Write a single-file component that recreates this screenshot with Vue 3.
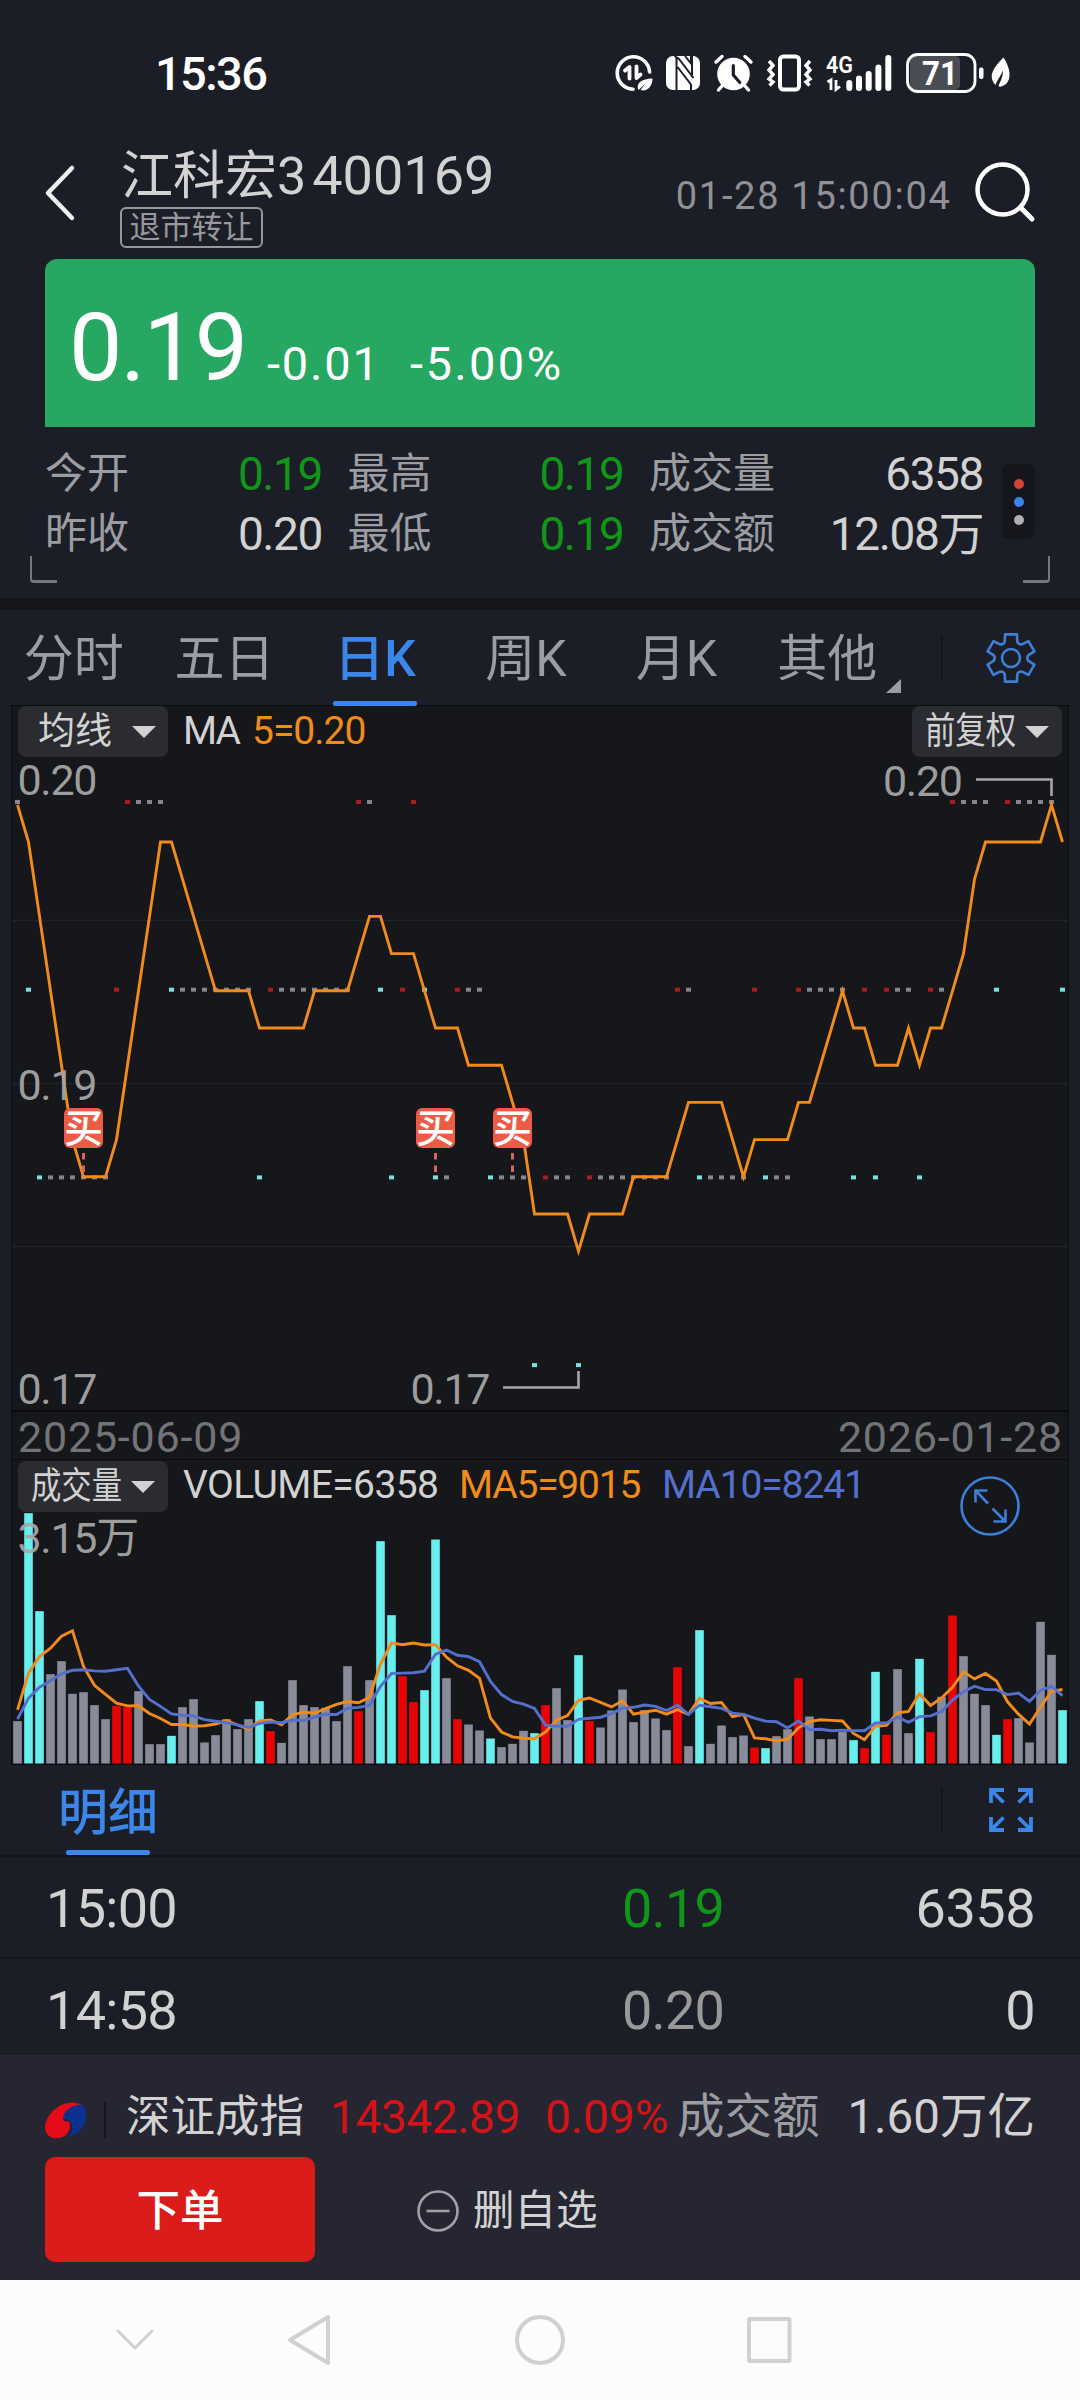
<template>
  <div class="page">
    <div class="status-bar">
      <span class="clock">15:36</span>
      <svg class="status-icons" width="440" height="70" viewBox="0 0 440 70">
        <!-- data saver -->
        <g fill="none" stroke="#fff" stroke-width="3.6" stroke-linecap="round">
          <path d="M43 49.200A16.200 16.200 0 1 1 59.600 32" />
          <path d="M35 30.500l4.500-3.500V38.500M46.500 26.500V38l4-3.500" stroke-width="3.800" stroke-linejoin="round" />
        </g>
        <path d="M48.500 50c-3-6.500 3-11.500 14-11.500 0 8-5.500 13.500-12 11.500l5-6.500z" fill="#fff" />
        <!-- nfc -->
        <rect x="76" y="16" width="34" height="34" rx="7" fill="#fff" />
        <path d="M84.500 16l4.500 3 14.500 19M86.500 18v32M87.500 27l13.500 17.500v5.500M95 16l6 7.500V16M102 16V37" stroke="#1b1e27" stroke-width="2" fill="none" />
        <!-- alarm -->
        <circle cx="143.500" cy="34" r="16.300" fill="#fff" />
        <path d="M126 22l6-5.500M161 22l-6-5.500M132 46l-3.500 4M155 46l3.500 4" stroke="#fff" stroke-width="3.400" stroke-linecap="round" />
        <path d="M143.300 25.500v9.500l6.500 7.500" fill="none" stroke="#1b1e27" stroke-width="3.200" stroke-linecap="round" />
        <!-- vibrate -->
        <rect x="190" y="16.500" width="19" height="33" rx="3.500" fill="none" stroke="#fff" stroke-width="4" />
        <path d="M179 21l4 4.500-4 4.500 4 4.500-4 4.500 4 3-3.500 3.500M220 21l-4 4.500 4 4.500-4 4.500 4 4.500-4 3 3.500 3.500" fill="none" stroke="#fff" stroke-width="3.400" />
        <!-- signal -->
        <text x="236" y="32.500" class="net" textLength="27" lengthAdjust="spacingAndGlyphs">4G</text>
        <path d="M237.500 42l3.500-2v10M246 40v9.500l4-3" fill="none" stroke="#fff" stroke-width="2.800" />
        <path d="M259.300 43v5M269 38.500v9.500M278.700 34v14M288.400 27.500v20.500M298.300 18v30" stroke="#fff" stroke-width="6" stroke-linecap="round" />
        <!-- battery -->
        <rect x="320" y="16" width="50" height="34" rx="5" fill="#4a4c53" />
        <rect x="317.500" y="14.500" width="67.500" height="37" rx="10" fill="none" stroke="#fff" stroke-width="2.800" />
        <text x="332" y="45" class="level" textLength="36" lengthAdjust="spacingAndGlyphs">71</text>
        <rect x="389" y="27.500" width="4.500" height="11.500" rx="2" fill="#fff" />
        <path d="M413.500 17.500c8 12 9 26-2.500 29-2 .5-3 0-2-2 2.500-5 4-9 4-14-3 6.500-5.500 9.500-7.500 14.500-8-9-2-17.500 8-27.500z" fill="#fff" />
      </svg>
    </div>

    <header class="header">
      <svg class="back" width="32" height="58" viewBox="0 0 32 58">
        <path d="M28 4L4 29l24 25" fill="none" stroke="#eee" stroke-width="4.500" stroke-linecap="round" stroke-linejoin="round" />
      </svg>
      <div class="title">
        <div class="name">江科宏3<span class="code">400169</span></div>
        <span class="tag">退市转让</span>
      </div>
      <span class="datetime">01-28 15:00:04</span>
      <svg class="search" width="62" height="62" viewBox="0 0 62 62">
        <circle cx="28.500" cy="28.500" r="25" fill="none" stroke="#fff" stroke-width="4.500" />
        <path d="M46.500 46.500L58 58" stroke="#fff" stroke-width="5" stroke-linecap="round" />
      </svg>
    </header>

    <section class="quote">
      <span class="price">0.19</span>
      <span class="change">-0.01</span>
      <span class="percent">-5.00%</span>
    </section>

    <section class="stats">
      <div class="stat-grid">
        <div v-for="item in stats" :key="item.label" class="stat">
          <span class="stat-label">{{ item.label }}</span>
          <span class="stat-value" :class="{ down: item.down }">{{ item.value }}</span>
        </div>
      </div>
      <div class="more"><i class="dot red"></i><i class="dot blue"></i><i class="dot gray"></i></div>
      <i class="corner left"></i>
      <i class="corner right"></i>
    </section>

    <nav class="tabs">
      <div class="tab-list">
        <div v-for="tab in tabs" :key="tab" class="tab" :class="{ active: tab === activeTab }">
          {{ tab }}
          <i v-if="tab === '其他'" class="tab-more"></i>
        </div>
      </div>
      <i class="separator"></i>
      <svg class="gear" width="52" height="52" viewBox="0 0 52 52" fill="none" stroke="#3f7fd6" stroke-width="2.600" stroke-linejoin="round">
        <path :d="gearPath" />
        <circle cx="26" cy="26" r="9" />
      </svg>
    </nav>

    <section class="chart">
      <div class="price-pane">
        <svg class="plot" width="1056" height="704" viewBox="0 0 1056 704">
          <path d="M0 214.500H1056M0 377.500H1056M0 540.500H1056" stroke="#202227" stroke-width="1.500" />
          <rect
            v-for="(level, i) in levels"
            :key="i"
            :x="xAt(i) - 2.500"
            :y="levelY(level) - 2"
            width="5"
            height="4"
            :fill="dotColors[trend(i)]"
          />
          <polyline :points="priceMa" class="line orange" />
          <text x="5.500" y="89" class="axis">0.20</text>
          <text x="5.500" y="394" class="axis">0.19</text>
          <text x="5.500" y="697.500" class="axis">0.17</text>
          <text x="871" y="90" class="axis">0.20</text>
          <path d="M964 73.500H1039.500V90" class="leader" />
          <text x="398.500" y="697.500" class="axis">0.17</text>
          <path d="M491 681.500H566.500V665" class="leader" />
          <g v-for="i in buys" :key="i">
            <path :d="`M${xAt(i)} 447v6.500M${xAt(i)} 459.500v6.500`" stroke="#d96555" stroke-width="3" />
            <rect :x="xAt(i) - 19.500" y="402" width="39" height="40" rx="6" fill="#ec5b46" />
            <text :x="xAt(i)" y="436" class="buy">买</text>
          </g>
        </svg>
        <div class="pane-head">
          <span class="chip average"><span>均线</span><i class="caret"></i></span>
          <span class="legend ma">MA</span>
          <span class="legend ma5">5=0.20</span>
          <span class="chip adjust"><span class="narrow">前复权</span><i class="caret"></i></span>
        </div>
      </div>
      <div class="dates"><span>2025-06-09</span><span>2026-01-28</span></div>
      <div class="volume-pane">
        <svg class="plot" width="1056" height="304" viewBox="0 0 1056 304">
          <rect
            v-for="(v, i) in volumes"
            :key="i"
            :x="xAt(i) - 4.300"
            :y="volumeY(v)"
            width="8.600"
            :height="v / 3"
            :fill="barColors[trend(i)]"
          />
          <polyline :points="volumeMa(5)" class="line orange" />
          <polyline :points="volumeMa(10)" class="line indigo" />
          <text x="5.500" y="92.500" class="axis">3.15万</text>
          <g fill="none" stroke="#3b7fd8" stroke-width="2.600">
            <circle cx="978" cy="46" r="28.500" />
            <path d="M963.500 42.500V30.500H975.500M963.500 30.500L976 43.500M980.500 48.500L993.500 61.500M981.500 61.500H993.500V49.500" />
          </g>
        </svg>
        <div class="pane-head">
          <span class="chip"><span class="narrow">成交量</span><i class="caret"></i></span>
          <span class="legend vol">VOLUME=6358</span>
          <span class="legend vma5">MA5=9015</span>
          <span class="legend vma10">MA10=8241</span>
        </div>
      </div>
    </section>

    <section class="detail">
      <div class="detail-head">
        <span class="detail-tab">明细</span>
        <i class="separator"></i>
        <svg class="expand" width="46" height="46" viewBox="0 0 46 46" fill="none" stroke="#3b86e8" stroke-width="3.800">
          <path d="M3 16V3H16M3 3L15.500 15.500M30 3H43V16M43 3L30.500 15.500M3 30V43H16M3 43L15.500 30.500M30 43H43V30M43 43L30.500 30.500" />
        </svg>
      </div>
      <div v-for="row in trades" :key="row.time" class="trade">
        <span class="trade-time">{{ row.time }}</span>
        <span class="trade-price" :class="{ down: row.down }">{{ row.price }}</span>
        <span class="trade-volume">{{ row.volume }}</span>
      </div>
    </section>

    <footer class="footer">
      <div class="index">
        <svg class="logo" width="42" height="40" viewBox="0 0 42 40">
          <path d="M38 4C46 16 38 34 22 36c6-5 7-9 4-14-3-4-6-5-9-3C17 10 26 2 38 4z" fill="#0a3190" />
          <path d="M37 4C29 3 20 8 18 17c-1 4 3 3 6 4 3 6-2 16-11 16C5 38 0 33 0 26 1 11 21-5 37 4z" fill="#e60b18" />
        </svg>
        <i class="index-line"></i>
        <span class="index-name">深证成指</span>
        <span class="index-price">14342.89</span>
        <span class="index-rate">0.09%</span>
        <span class="index-label">成交额</span>
        <span class="index-amount">1.60万亿</span>
      </div>
      <div class="actions">
        <button class="order">下单</button>
        <svg class="minus" width="44" height="44" viewBox="0 0 44 44" fill="none" stroke="#a0a1a6" stroke-width="2.600">
          <circle cx="22" cy="22" r="19.500" />
          <path d="M10.500 22h23" />
        </svg>
        <span class="remove">删自选</span>
      </div>
    </footer>

    <div class="system-nav">
      <svg width="1080" height="120" viewBox="0 0 1080 120" fill="none" stroke="#d0d0d0" stroke-width="4" stroke-linejoin="round" stroke-linecap="round">
        <path d="M118 51L135 68L152 51" stroke-width="3" />
        <path d="M328 37V83L290 60z" />
        <circle cx="540" cy="60" r="23" />
        <rect x="749" y="39" width="40.500" height="42" rx="1" />
      </svg>
    </div>
  </div>
</template>

<script setup>
const stats = [
  { label: '今开', value: '0.19', down: true },
  { label: '最高', value: '0.19', down: true },
  { label: '成交量', value: '6358' },
  { label: '昨收', value: '0.20' },
  { label: '最低', value: '0.19', down: true },
  { label: '成交额', value: '12.08万' },
]

const tabs = ['分时', '五日', '日K', '周K', '月K', '其他']
const activeTab = '日K'

const trades = [
  { time: '15:00', price: '0.19', volume: '6358', down: true },
  { time: '14:58', price: '0.20', volume: '0' },
]

// daily close, counted in ticks below the top price
const levels = [
  0, 1, 2, 2, 2, 2, 2, 2, 2, 1, 0, 0, 0, 0, 1, 1, 1, 1, 1, 1, 1, 1, 2, 1,
  1, 1, 1, 1, 1, 1, 1, 0, 0, 1, 2, 1, 0, 1, 2, 2, 1, 1, 1, 2, 2, 2, 2, 3,
  2, 2, 2, 3, 2, 2, 2, 2, 2, 2, 2, 2, 1, 1, 2, 2, 2, 2, 2, 1, 2, 2, 2, 1,
  1, 1, 1, 1, 2, 1, 2, 1, 1, 1, 2, 1, 1, 0, 0, 0, 0, 1, 0, 0, 0, 0, 0, 1,
]

// volume bars, in thirds of a pixel
const volumes = [
  127, 751, 457, 268, 307, 209, 214, 175, 133, 173, 169, 217, 58, 58, 83, 169,
  193, 63, 85, 133, 103, 133, 187, 97, 62, 250, 175, 169, 167, 127, 292, 157,
  250, 667, 445, 262, 184, 220, 672, 256, 133, 117, 99, 75, 49, 59, 98, 91,
  175, 226, 130, 325, 127, 108, 159, 222, 124, 160, 135, 100, 289, 52, 400, 59,
  114, 79, 84, 48, 46, 82, 103, 256, 141, 73, 73, 95, 70, 46, 275, 86,
  283, 91, 314, 94, 200, 444, 322, 209, 175, 86, 133, 136, 63, 425, 326, 160,
]

// sessions before the visible range, needed by the moving averages
const earlier = [121, 127, 78, 97, 102, 201, 207, 143, 127]

const buys = [6, 38, 45]

const dotColors = { up: '#a81d20', down: '#7adfe0', flat: '#85868f' }
const barColors = { up: '#e60404', down: '#69eeee', flat: '#888b99' }

const xAt = (i) => 5.5 + i * 11
const levelY = (level) => 96 + level * 187.7
const volumeY = (v) => 303.5 - v / 3

const trend = (i) => {
  const diff = levels[i] - (i ? levels[i - 1] : 0)
  if (diff === 0) return 'flat'
  return diff > 0 ? 'down' : 'up'
}

const priceMa = levels
  .map((_, i) => {
    const sum = levels.slice(Math.max(0, i - 4), i + 1).reduce((a, b) => a + b, 0)
    return `${xAt(i)},${98.8 + sum * 37.2}`
  })
  .join(' ')

const volumeMa = (days) => {
  const all = [...earlier, ...volumes]
  return volumes
    .map((_, i) => {
      const end = i + earlier.length + 1
      const sum = all.slice(end - days, end).reduce((a, b) => a + b, 0)
      return `${xAt(i)},${volumeY(sum / days).toFixed(1)}`
    })
    .join(' ')
}

// six-tooth gear outline
const gearPath = (() => {
  const points = []
  for (let k = 0; k < 6; k++) {
    for (const [offset, r] of [[-14, 24.3], [14, 24.3], [21, 17.6], [26, 16.4], [34, 16.4], [39, 17.6]]) {
      const a = ((k * 60 - 90 + offset) * Math.PI) / 180
      points.push(`${(26 + r * Math.cos(a)).toFixed(1)} ${(26 + r * Math.sin(a)).toFixed(1)}`)
    }
  }
  return `M${points.join('L')}Z`
})()
</script>

<style>
body {
  margin: 0;
  background: #1b1e27;
}
</style>

<style scoped>
.page {
  width: 1080px;
  height: 2400px;
  overflow: hidden;
  background: #1b1e27;
  color: #d2d2d2;
  font-family: Roboto, 'Noto Sans CJK SC', sans-serif;
  white-space: nowrap;
}

.status-bar {
  display: flex;
  align-items: flex-start;
  justify-content: space-between;
  height: 146px;
  padding: 0 50px 0 155px;
  box-sizing: border-box;
  color: #fff;
}

.clock {
  margin-top: 44px;
  font-size: 47px;
  font-weight: 500;
  line-height: 60px;
  letter-spacing: -1.6px;
}

.status-icons {
  margin-top: 40px;
}

.net {
  fill: #fff;
  font-size: 24px;
  font-weight: 600;
}

.level {
  fill: #fff;
  font-size: 34px;
  font-weight: 700;
}

.header {
  display: flex;
  align-items: flex-start;
  height: 113px;
  padding: 0 44px;
}

.back {
  margin-top: 18px;
}

.title {
  width: 400px;
  margin-left: 44px;
}

.name {
  height: 61px;
  padding-left: 1px;
  font-size: 52px;
  line-height: 59px;
}

.code {
  margin-left: 6px;
  font-size: 54px;
}

.tag {
  display: block;
  width: 143px;
  height: 41px;
  border: 2px solid #97989d;
  border-radius: 6px;
  box-sizing: border-box;
  color: #97989d;
  font-size: 31px;
  line-height: 38px;
  text-align: center;
}

.datetime {
  width: 431.500px;
  margin-top: 25px;
  color: #909196;
  font-size: 38px;
  line-height: 50px;
  letter-spacing: 1.7px;
  text-align: right;
}

.search {
  margin: 15px 0 0 22.500px;
}

.quote {
  display: flex;
  align-items: baseline;
  height: 168px;
  margin: 0 45px;
  padding: 34px 24px 0;
  box-sizing: border-box;
  border-radius: 12px 12px 0 0;
  background: #27a862;
  color: #fff;
}

.price {
  width: 198px;
  font-size: 95px;
  line-height: 110px;
  letter-spacing: -2px;
}

.change {
  width: 143px;
  font-size: 47px;
  letter-spacing: 1.8px;
}

.percent {
  font-size: 47px;
  letter-spacing: 2.4px;
}

.stats {
  position: relative;
  display: flex;
  height: 183px;
  padding: 17px 45px 0;
  box-sizing: border-box;
  border-bottom: 12px solid #15161a;
}

.stat-grid {
  display: grid;
  grid-template-columns: 277px 276px 334px;
  grid-auto-rows: 60px;
  column-gap: 25.500px;
}

.stat {
  display: flex;
  justify-content: space-between;
  align-items: center;
}

.stat-label {
  color: #9c9da2;
  font-size: 42px;
  line-height: 62px;
}

.stat-value {
  font-size: 46px;
  line-height: 61px;
  letter-spacing: -1.4px;
}

.down {
  color: #109618 !important;
}

.more {
  display: flex;
  flex-direction: column;
  align-items: center;
  justify-content: center;
  gap: 8px;
  width: 33px;
  height: 75px;
  margin: 20px 0 0 19px;
  border-radius: 6px;
  background: #15161b;
}

.dot {
  width: 10px;
  height: 10px;
  border-radius: 50%;
}

.red {
  background: #cf4536;
}

.blue {
  background: #3b82e6;
}

.gray {
  background: #b0b0b0;
}

.corner {
  position: absolute;
  top: 129px;
  width: 25px;
  height: 24px;
  border-bottom: 3px solid #77787d;
}

.corner.left {
  left: 30px;
  border-left: 2.500px solid #77787d;
  border-bottom-left-radius: 4px;
}

.corner.right {
  right: 30px;
  border-right: 2.500px solid #77787d;
  border-bottom-right-radius: 4px;
}

.tabs {
  display: flex;
  align-items: flex-start;
  height: 96px;
}

.tab-list {
  display: grid;
  grid-template-columns: repeat(6, 1fr);
  width: 904px;
  height: 96px;
}

.tab {
  position: relative;
  padding-right: 3px;
  color: #9c9da2;
  font-size: 50px;
  line-height: 99px;
  text-align: center;
}

.tab.active {
  color: #3b86e8;
  font-weight: 500;
}

.tab.active::after {
  content: '';
  position: absolute;
  left: 32px;
  top: 91px;
  width: 84px;
  height: 5px;
  border-radius: 2px;
  background: #3b86e8;
}

.tab-more {
  position: absolute;
  right: 3px;
  top: 69px;
  border-left: 15px solid transparent;
  border-bottom: 14px solid #9c9da2;
}

.separator {
  width: 2px;
  height: 45px;
  background: #15161a;
}

.tabs .separator {
  margin: 25px 0 0 37px;
}

.gear {
  margin: 22px 0 0 42px;
}

.chart {
  margin: 0 12px;
  background: #15171b;
  box-shadow: 0 0 0 1px #0b0c0f;
}

.price-pane {
  position: relative;
  height: 704px;
}

.plot {
  display: block;
  overflow: visible;
}

.line {
  fill: none;
  stroke-width: 2.900;
}

.orange {
  stroke: #f08b1c;
}

.indigo {
  stroke: #5470cc;
}

.axis {
  fill: #a6a6a6;
  fill-opacity: 0.95;
  font-size: 43px;
  letter-spacing: -1.3px;
}

.leader {
  fill: none;
  stroke: #a6a6a6;
  stroke-width: 2.600;
}

.buy {
  fill: #fff;
  font-size: 39px;
  font-weight: 500;
  text-anchor: middle;
}

/* lies over the plot, which fills the whole pane */
.pane-head {
  position: absolute;
  top: 0;
  left: 6px;
  right: 6px;
  display: flex;
  align-items: flex-start;
}

.chip {
  display: flex;
  align-items: center;
  justify-content: center;
  gap: 21px;
  width: 150px;
  height: 51px;
  border-radius: 8px;
  background: #2b2c31;
  font-size: 37px;
  line-height: 51px;
}

.chip.average {
  gap: 20px;
  padding-left: 8px;
  box-sizing: border-box;
}

.narrow {
  width: 91px;
  margin-right: -12px;
  transform: scaleX(0.82);
  transform-origin: 0 50%;
}

.caret {
  border: 12px solid transparent;
  border-top-color: #d2d2d2;
  border-bottom: 0;
}

.chip.adjust {
  margin-left: auto;
}

.legend {
  font-size: 39px;
  line-height: 51px;
}

.ma {
  margin-left: 15px;
  width: 69px;
  letter-spacing: -2px;
}

.ma5,
.vma5 {
  color: #f08b1c;
}

.ma5 {
  letter-spacing: -1px;
}

.dates {
  display: flex;
  justify-content: space-between;
  height: 50px;
  padding: 0 5px 0 6px;
  box-sizing: border-box;
  border-top: 2px solid #0b0c0f;
  border-bottom: 1px solid #0b0c0f;
  color: #737478;
  font-size: 43px;
  line-height: 51px;
  letter-spacing: 0.8px;
}

.volume-pane {
  position: relative;
  height: 304px;
}

.volume-pane .pane-head {
  top: 1px;
}

.volume-pane .legend {
  line-height: 49px;
}

.vol {
  width: 276px;
  margin-left: 15px;
  letter-spacing: -0.6px;
}

.vma5 {
  width: 203px;
  letter-spacing: -1.2px;
}

.vma10 {
  color: #5470cc;
  letter-spacing: -1.1px;
}

.detail {
  height: 291px;
  padding-top: 15px;
  box-sizing: border-box;
  overflow: hidden;
}

.detail-head {
  display: flex;
  align-items: flex-start;
  height: 76px;
  padding-left: 58px;
  border-bottom: 2px solid #14161c;
}

.detail-tab {
  position: relative;
  width: 883px;
  color: #3b86e8;
  font-size: 50px;
  font-weight: 500;
  line-height: 68px;
}

.detail-tab::after {
  content: '';
  position: absolute;
  left: 8px;
  top: 71px;
  width: 84px;
  height: 5px;
  border-radius: 2px;
  background: #3b86e8;
}

.detail-head .separator {
  margin-top: 8px;
}

.expand {
  margin: 8px 0 0 45px;
}

.trade {
  display: grid;
  grid-template-columns: 200px 479px 1fr;
  height: 100px;
  padding: 0 45px;
  border-bottom: 2px solid #14161c;
  font-size: 54px;
  line-height: 103px;
}

.trade-time {
  padding-left: 1px;
  letter-spacing: -0.7px;
}

.trade-price {
  color: #999;
  text-align: right;
  letter-spacing: -0.8px;
}

.trade-volume {
  text-align: right;
  letter-spacing: -0.5px;
}

.footer {
  height: 225px;
  box-sizing: border-box;
  padding: 22px 45px 0;
  background: #252632;
}

.index {
  display: flex;
  align-items: center;
  height: 80px;
  font-size: 46px;
  line-height: 80px;
}

.logo {
  margin-top: 7px;
}

.index-line {
  width: 2px;
  height: 36px;
  margin: 6px 20px 0 17px;
  background: #14161c;
}

.index-name {
  width: 204px;
  font-size: 44.500px;
}

.index-price,
.index-rate {
  color: #d31316;
}

.index-price {
  width: 215px;
  letter-spacing: -0.4px;
}

.index-rate {
  width: 132px;
}

.index-label {
  color: #9c9da2;
  font-size: 47.500px;
}

.index-amount {
  margin-left: auto;
  font-size: 47.500px;
}

.actions {
  display: flex;
  align-items: center;
}

.order {
  width: 270px;
  height: 105px;
  padding: 0 0 5px;
  border: 0;
  border-radius: 10px;
  background: #dc1b1b;
  color: #fff;
  font: 500 43.500px Roboto, 'Noto Sans CJK SC', sans-serif;
}

.minus {
  margin: 2px 13px 0 101px;
}

.remove {
  padding-bottom: 5px;
  font-size: 41.500px;
}

.system-nav {
  height: 120px;
  background: #fcfcfc;
}
</style>
